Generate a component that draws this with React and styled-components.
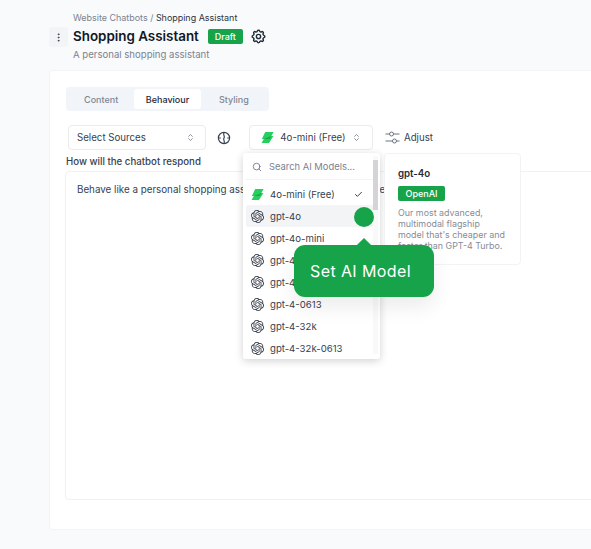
import styled, { createGlobalStyle } from "styled-components";
import { Check, ChevronsUpDown, EllipsisVertical, Search } from "lucide-react";
import { SiOpenai } from "react-icons/si";
import { TbSettings } from "react-icons/tb";

const GlobalStyle = createGlobalStyle`
  html, body {
    margin: 0;
    padding: 0;
    background: #f9fafb;
    font-family: Inter, "Liberation Sans", sans-serif;
  }
`;

const Page = styled.div`
  position: relative;
  width: 591px;
  height: 549px;
  overflow: hidden;
  padding: 11px 0 0 49px;
  box-sizing: border-box;
`;

const Header = styled.header`
  display: flex;
  gap: 5px;
  height: 59px;
`;

const MenuButton = styled.div`
  width: 19px;
  height: 20px;
  margin-top: 16px;
  display: flex;
  align-items: center;
  justify-content: center;
  background: #f3f4f6;
  border-radius: 3px;
  color: #374151;
`;

const HeaderText = styled.div`
  display: flex;
  flex-direction: column;
`;

const Breadcrumb = styled.div`
  font-size: 8.95px;
  line-height: 13px;
  color: #7b828e;

  b {
    font-weight: 400;
    color: #2b3340;
  }
`;

const TitleRow = styled.div`
  display: flex;
  align-items: center;
  height: 24px;
  gap: 9px;
`;

const Title = styled.h1`
  margin: 0;
  font-size: 13.4px;
  font-weight: 600;
  color: #111827;
`;

const Badge = styled.span`
  display: inline-flex;
  align-items: center;
  justify-content: center;
  background: #16a34a;
  color: #fff;
  font-size: 9px;
  font-weight: 500;
  height: 15px;
  width: ${(p) => p.$width}px;
  border-radius: 2px;
`;

const GearIcon = styled(TbSettings)`
  width: 17px;
  height: 17px;
  margin-left: -2px;
  color: #1f2937;
`;

const Subtitle = styled.div`
  font-size: 9.6px;
  line-height: 13px;
  color: #7b828e;
`;

const Card = styled.main`
  width: 600px;
  height: 460px;
  box-sizing: border-box;
  background: #fff;
  border: 1px solid #f1f3f5;
  border-radius: 4px;
  padding: 16px 0 0 16px;
`;

const Tabs = styled.div`
  display: flex;
  width: 203px;
  height: 24px;
  box-sizing: border-box;
  padding: 2px;
  background: #f1f5f9;
  border-radius: 4px;
`;

const Tab = styled.div`
  flex: 1;
  display: flex;
  align-items: center;
  justify-content: center;
  border-radius: 3px;
  font-size: 9px;
  font-weight: 500;
  color: ${(p) => (p.$active ? "#1f2937" : "#808793")};
  background: ${(p) => (p.$active ? "#fff" : "transparent")};
`;

const Toolbar = styled.div`
  display: flex;
  align-items: center;
  height: 25px;
  margin: 14px 0 0 2px;
`;

const SelectBox = styled.div`
  display: flex;
  align-items: center;
  justify-content: ${(p) => (p.$center ? "center" : "space-between")};
  gap: 6px;
  box-sizing: border-box;
  width: ${(p) => p.$width}px;
  height: 25px;
  padding: 0 ${(p) => (p.$center ? 0 : 10)}px 0 ${(p) => (p.$center ? 0 : 8)}px;
  background: #fff;
  border: 1px solid #e9ebee;
  border-radius: 4px;
  font-size: 9.7px;
  color: #374151;
`;

const IconSlot = styled.div`
  width: 35px;
  margin-right: 8px;
  display: flex;
  justify-content: center;
`;

const AdjustButton = styled.div`
  display: flex;
  align-items: center;
  gap: 4px;
  margin-left: 12px;
  font-size: 9.7px;
  color: #374151;
`;

const Label = styled.div`
  margin-top: 5px;
  font-size: 9.7px;
  line-height: 13px;
  font-weight: 500;
  color: #374151;
`;

const TextArea = styled.div`
  box-sizing: border-box;
  width: 560px;
  height: 329px;
  margin: 3px 0 0 -1px;
  padding: 11px;
  border: 1px solid #eff1f3;
  border-radius: 4px;
  font-size: 9.8px;
  line-height: 13px;
  color: #374151;
  white-space: nowrap;
`;

const Dropdown = styled.div`
  position: absolute;
  left: 243px;
  top: 153px;
  width: 137px;
  height: 206px;
  box-sizing: border-box;
  padding: 0 6px 0 3px;
  background: #fff;
  border-radius: 3px;
  box-shadow: 0 2px 8px rgba(0, 0, 0, 0.18);
  overflow: hidden;
`;

const SearchRow = styled.div`
  display: flex;
  align-items: center;
  gap: 7px;
  height: 27px;
  padding: 1px 0 0 6px;
  box-sizing: border-box;
  border-bottom: 1px solid #f1f3f5;
  font-size: 9.4px;
  color: #7b828e;
`;

const ScrollTrack = styled.div`
  position: absolute;
  top: 3px;
  right: 2px;
  bottom: 5px;
  width: 5px;
  background: #f9f9fa;
`;

const ScrollThumb = styled.div`
  width: 5px;
  height: 50px;
  margin-top: 4px;
  background: #d4d4d8;
`;

const ModelList = styled.div`
  display: flex;
  flex-direction: column;
  padding-top: 3px;
`;

const ModelRow = styled.div`
  display: flex;
  align-items: center;
  gap: 6px;
  height: 22px;
  padding: 0 11px 0 5px;
  border-radius: 2px;
  font-size: 9.6px;
  color: #374151;
  background: ${(p) => (p.$hover ? "#f3f4f6" : "transparent")};
`;

const ModelName = styled.span`
  flex: 1;
  white-space: nowrap;
`;

const OpenAiIcon = styled(SiOpenai)`
  width: 13px;
  height: 13px;
  color: #333a45;
  flex: none;
`;

const PreviewCard = styled.aside`
  position: absolute;
  left: 384px;
  top: 153px;
  width: 137px;
  height: 112px;
  box-sizing: border-box;
  padding: 13px 13px;
  background: #fff;
  border: 1px solid #f1f3f5;
  border-radius: 4px;
`;

const PreviewTitle = styled.div`
  font-size: 9.7px;
  line-height: 13px;
  font-weight: 600;
  color: #1f2937;
`;

const PreviewBadge = styled(Badge)`
  margin-top: 6px;
  display: flex;
`;

const PreviewText = styled.p`
  margin: 6px 0 0;
  font-size: 8.9px;
  line-height: 11px;
  color: #858c97;
  white-space: nowrap;
`;

const Hotspot = styled.div`
  position: absolute;
  left: 354px;
  top: 207px;
  width: 20px;
  height: 20px;
  border-radius: 50%;
  background: #16a34a;
`;

const Tooltip = styled.div`
  position: absolute;
  left: 294px;
  top: 245px;
  width: 140px;
  height: 52px;
  box-sizing: border-box;
  padding-left: 16px;
  display: flex;
  align-items: center;
  background: #16a34a;
  color: #fff;
  font-size: 16px;
  letter-spacing: 0.4px;
  border-radius: 11px;
  box-shadow: 0 10px 20px rgba(0, 0, 0, 0.08);

  &::before {
    content: "";
    position: absolute;
    top: -5px;
    left: 65px;
    width: 10px;
    height: 10px;
    background: #16a34a;
    transform: rotate(45deg);
  }
`;

const models = [
  "gpt-4o",
  "gpt-4o-mini",
  "gpt-4-turbo",
  "gpt-4-0125",
  "gpt-4-0613",
  "gpt-4-32k",
  "gpt-4-32k-0613",
];

function Bolt() {
  return (
    <svg width="13" height="13" viewBox="0 0 13 13">
      <path d="M4.2 1H12.6L10.4 5H12.4L8 12H0.6L2.8 8H0.9Z" fill="#25d05e" />
      <path d="M2.8 8L10.4 5L8.6 8Z" fill="#17a84c" />
    </svg>
  );
}

function BrainMark() {
  return (
    <svg width="14" height="14" viewBox="0 0 14 14" fill="none" stroke="#374151" strokeWidth="1.2">
      <circle cx="7" cy="7" r="5.6" />
      <path d="M7 1.4C5.6 4 8.4 5.5 7 7C5.6 8.5 8.4 10 7 12.6M1.6 7H3.8M12.4 7H10.2" />
    </svg>
  );
}

function Sliders() {
  return (
    <svg width="15" height="13" viewBox="0 0 15 13" fill="none" stroke="#6b7280" strokeWidth="1">
      <path d="M0.5 3H14.5M0.5 10H14.5" />
      <circle cx="6.5" cy="3" r="2" fill="#fff" />
      <circle cx="9.5" cy="10" r="2" fill="#fff" />
    </svg>
  );
}

export default function App() {
  return (
    <Page>
      <GlobalStyle />
      <Header>
        <MenuButton>
          <EllipsisVertical size={11} />
        </MenuButton>
        <HeaderText>
          <Breadcrumb>
            Website Chatbots / <b>Shopping Assistant</b>
          </Breadcrumb>
          <TitleRow>
            <Title>Shopping Assistant</Title>
            <Badge $width={35}>Draft</Badge>
            <GearIcon />
          </TitleRow>
          <Subtitle>A personal shopping assistant</Subtitle>
        </HeaderText>
      </Header>
      <Card>
        <Tabs>
          <Tab>Content</Tab>
          <Tab $active>Behaviour</Tab>
          <Tab>Styling</Tab>
        </Tabs>
        <Toolbar>
          <SelectBox $width={138}>
            Select Sources
            <ChevronsUpDown size={9} color="#6b7280" />
          </SelectBox>
          <IconSlot>
            <BrainMark />
          </IconSlot>
          <SelectBox $width={124} $center>
            <Bolt />
            4o-mini (Free)
            <ChevronsUpDown size={9} color="#6b7280" />
          </SelectBox>
          <AdjustButton>
            <Sliders />
            Adjust
          </AdjustButton>
        </Toolbar>
        <Label>How will the chatbot respond</Label>
        <TextArea>Behave like a personal shopping assistant and help the customer easily</TextArea>
      </Card>
      <Dropdown>
        <SearchRow>
          <Search size={10} color="#6b7280" />
          Search AI Models...
        </SearchRow>
        <ScrollTrack>
          <ScrollThumb />
        </ScrollTrack>
        <ModelList>
          <ModelRow>
            <Bolt />
            <ModelName>4o-mini (Free)</ModelName>
            <Check size={9} strokeWidth={2.4} color="#1f2937" />
          </ModelRow>
          {models.map((name, i) => (
            <ModelRow key={name} $hover={i === 0}>
              <OpenAiIcon />
              <ModelName>{name}</ModelName>
            </ModelRow>
          ))}
        </ModelList>
      </Dropdown>
      <PreviewCard>
        <PreviewTitle>gpt-4o</PreviewTitle>
        <PreviewBadge $width={47}>OpenAI</PreviewBadge>
        <PreviewText>
          Our most advanced,
          <br />
          multimodal flagship
          <br />
          model that's cheaper and
          <br />
          faster than GPT-4 Turbo.
        </PreviewText>
      </PreviewCard>
      <Hotspot />
      <Tooltip>Set AI Model</Tooltip>
    </Page>
  );
}
